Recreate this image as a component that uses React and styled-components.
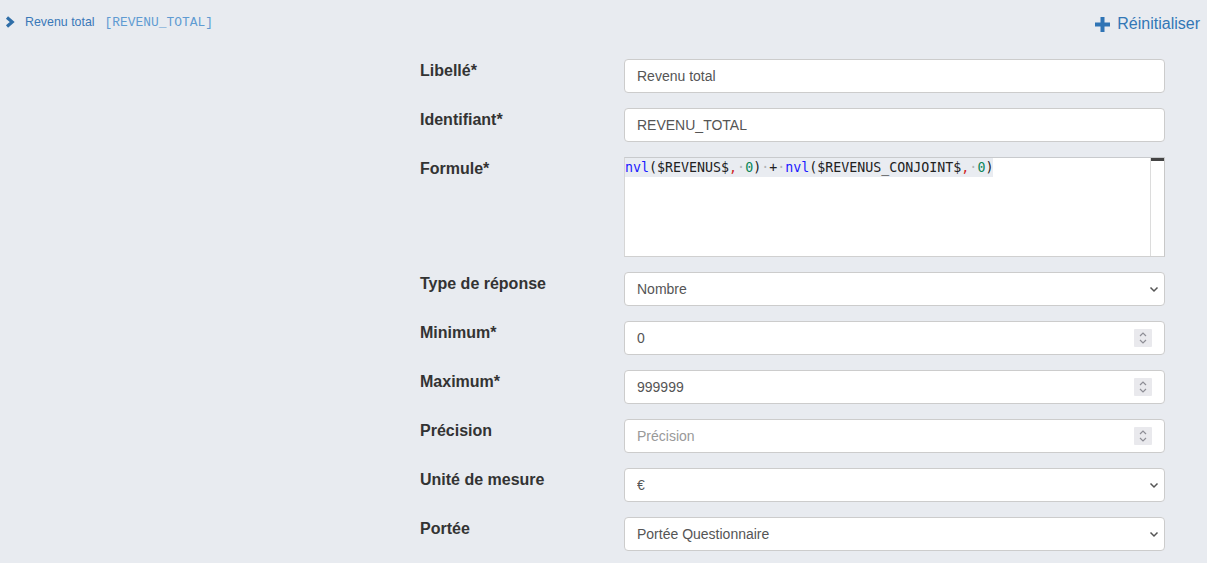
import React from 'react';
import styled, { createGlobalStyle } from 'styled-components';

const GlobalStyle = createGlobalStyle`
	html, body {
		margin: 0;
		padding: 0;
		background: #e8ebf0;
		font-family: "Liberation Sans", Arial, sans-serif;
	}
`;

const fields = [
	{ label: 'Libellé*', kind: 'text', value: 'Revenu total' },
	{ label: 'Identifiant*', kind: 'text', value: 'REVENU_TOTAL' },
	{ label: 'Formule*', kind: 'formula' },
	{ label: 'Type de réponse', kind: 'select', value: 'Nombre' },
	{ label: 'Minimum*', kind: 'number', value: '0' },
	{ label: 'Maximum*', kind: 'number', value: '999999' },
	{ label: 'Précision', kind: 'number', value: '', placeholder: 'Précision' },
	{ label: 'Unité de mesure', kind: 'select', value: '€' },
	{ label: 'Portée', kind: 'select', value: 'Portée Questionnaire' }
];

// tokens of the formula, with their colour type
const formula = [
	['fn', 'nvl'], ['p', '($REVENUS$'], ['c', ','], ['w', '·'], ['n', '0'], ['p', ')'],
	['w', '·'], ['p', '+'], ['w', '·'],
	['fn', 'nvl'], ['p', '($REVENUS_CONJOINT$'], ['c', ','], ['w', '·'], ['n', '0'], ['p', ')']
];

const Chevron = () => (
	<svg width="10" height="12" viewBox="0 0 10 12">
		<polyline points="2,1.5 7.2,6 2,10.5" fill="none" stroke="#2f6ea8" strokeWidth="3.2" />
	</svg>
);

const Plus = () => (
	<svg width="15" height="15" viewBox="0 0 15 15">
		<rect x="5.5" y="0" width="4" height="15" fill="#2f74b5" />
		<rect x="0" y="5.5" width="15" height="4" fill="#2f74b5" />
	</svg>
);

const Caret = () => (
	<svg width="10" height="7" viewBox="0 0 10 7">
		<polyline points="1.5,1.5 5,5 8.5,1.5" fill="none" stroke="#555" strokeWidth="1.5" />
	</svg>
);

const SpinArrows = () => (
	<svg width="10" height="14" viewBox="0 0 10 14">
		<polyline points="2,5 5,2 8,5" fill="none" stroke="#8e8e96" strokeWidth="1.2" />
		<polyline points="2,9 5,12 8,9" fill="none" stroke="#8e8e96" strokeWidth="1.2" />
	</svg>
);

const App = () => {
	const renderControl = (f) => {
		if (f.kind === 'formula') {
			return (
				<Editor>
					<CodeArea>
						<CodeLine>
							{formula.map(([t, s], i) => (
								<Token key={i} type={t}>{s}</Token>
							))}
						</CodeLine>
					</CodeArea>
					<Ruler>
						<RulerMark />
					</Ruler>
				</Editor>
			);
		}
		if (f.kind === 'select') {
			return (
				<Field>
					<Select defaultValue={f.value}>
						<option>{f.value}</option>
					</Select>
					<CaretBox>
						<Caret />
					</CaretBox>
				</Field>
			);
		}
		if (f.kind === 'number') {
			return (
				<Field>
					<Input type="text" defaultValue={f.value} placeholder={f.placeholder} />
					<Spinner>
						<SpinArrows />
					</Spinner>
				</Field>
			);
		}
		return (
			<Field>
				<Input type="text" defaultValue={f.value} />
			</Field>
		);
	};

	return (
		<Page>
			<GlobalStyle />
			<Header>
				<TitleGroup>
					<Chevron />
					<Title>Revenu total</Title>
					<Code>[REVENU_TOTAL]</Code>
				</TitleGroup>
				<ResetLink href="#">
					<Plus />
					Réinitialiser
				</ResetLink>
			</Header>
			<Form>
				{fields.map((f) => (
					<Row key={f.label}>
						<Label>{f.label}</Label>
						<Control>{renderControl(f)}</Control>
					</Row>
				))}
			</Form>
		</Page>
	);
};

export default App;

const Page = styled.div`
	width: 1207px;
	min-height: 563px;
`;

const Header = styled.div`
	display: flex;
	justify-content: space-between;
	align-items: center;
	height: 44px;
	padding: 0 7px 0 5px;
`;

const TitleGroup = styled.div`
	display: flex;
	align-items: center;
`;

const Title = styled.span`
	margin-left: 10px;
	font-size: 12.4px;
	color: #3a78b8;
`;

const Code = styled.span`
	margin-left: 10px;
	font-family: "Liberation Mono", "Courier New", monospace;
	font-size: 12.9px;
	color: #5f9bd2;
`;

const ResetLink = styled.a`
	display: flex;
	align-items: center;
	gap: 7px;
	margin-top: 4px;
	font-size: 16px;
	color: #3277b6;
	text-decoration: none;
`;

const Form = styled.form`
	display: flex;
	flex-direction: column;
	margin: 15px 0 0 420px;
	width: 745px;
`;

const Row = styled.div`
	display: flex;
	margin-bottom: 15px;
`;

const Label = styled.label`
	width: 204px;
	padding-top: 1px;
	font-size: 16px;
	line-height: 22px;
	font-weight: bold;
	color: #333;
`;

const Control = styled.div`
	flex: 1;
`;

const Field = styled.div`
	display: flex;
	align-items: center;
	height: 34px;
	box-sizing: border-box;
	background: #fff;
	border: 1px solid #ccc;
	border-radius: 4px;
`;

const Input = styled.input`
	flex: 1;
	min-width: 0;
	height: 100%;
	padding: 0 12px;
	border: none;
	outline: none;
	background: transparent;
	font-family: "Liberation Sans", Arial, sans-serif;
	font-size: 14px;
	color: #555;
	&::placeholder {
		color: #999;
	}
`;

const Select = styled.select`
	flex: 1;
	height: 100%;
	padding: 0 12px;
	border: none;
	outline: none;
	background: transparent;
	appearance: none;
	font-family: "Liberation Sans", Arial, sans-serif;
	font-size: 14px;
	color: #555;
`;

const CaretBox = styled.span`
	display: flex;
	margin-right: 5px;
`;

const Spinner = styled.span`
	display: flex;
	align-items: center;
	justify-content: center;
	width: 18px;
	height: 18px;
	margin-right: 12px;
	background: #e9e9ed;
	border-radius: 1px;
`;

const Editor = styled.div`
	display: flex;
	height: 100px;
	box-sizing: border-box;
	background: #fff;
	border-top: 1px solid #c8cacd;
	border-left: 1px solid #d6d6d6;
	border-bottom: 1px solid #d0d0d0;
	border-right: 1px solid #c8c8c8;
`;

const CodeArea = styled.div`
	flex: 1;
`;

const CodeLine = styled.div`
	display: inline-block;
	background: #e9ecf1;
	font-family: "DejaVu Sans Mono", monospace;
	font-size: 13.3px;
	line-height: 19px;
	white-space: pre;
`;

const tokenColors = {
	fn: '#1a1aff',
	p: '#222',
	c: '#d02525',
	n: '#098658',
	w: '#b0b4b8'
};

const Token = styled.span`
	color: ${(p) => tokenColors[p.type]};
`;

const Ruler = styled.div`
	width: 13px;
	border-left: 1px solid #dcdcdc;
`;

const RulerMark = styled.div`
	height: 3px;
	background: #444;
`;
